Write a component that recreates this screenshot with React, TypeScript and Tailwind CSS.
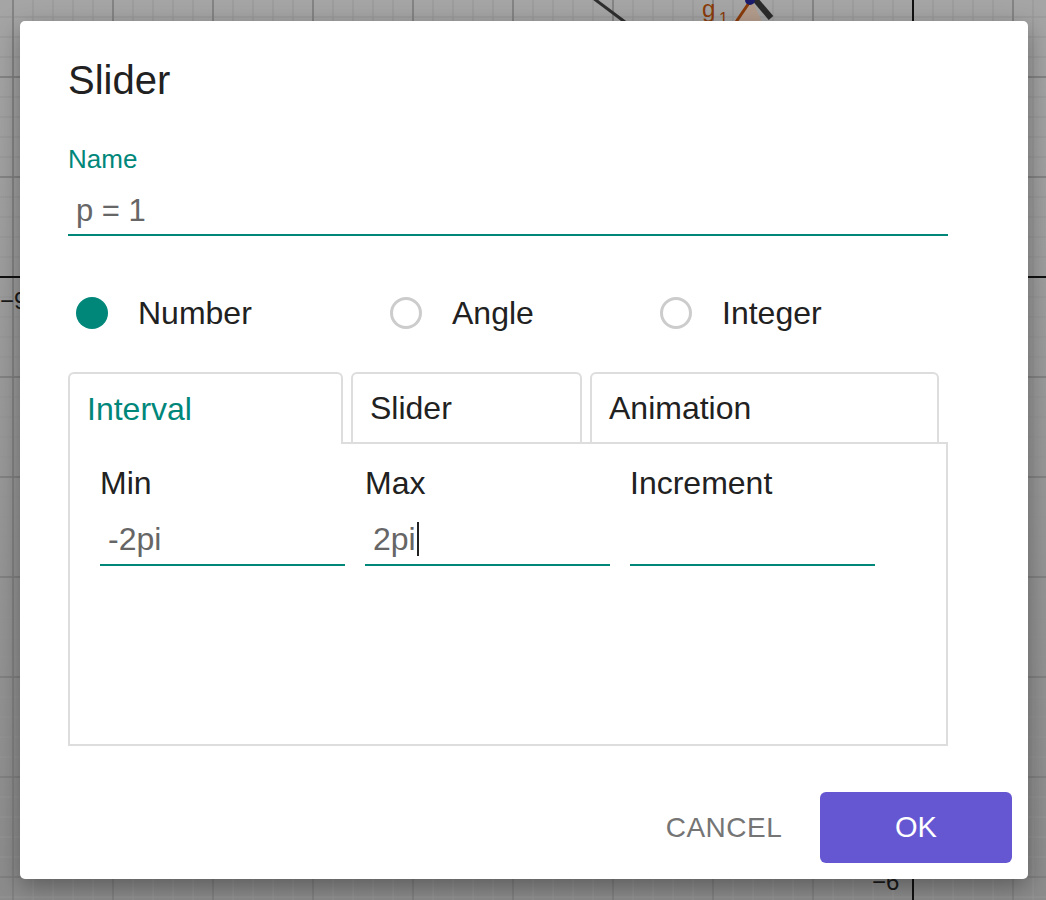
import React, { useState } from "react";

// grey graph canvas behind the dialog overlay
const GraphBackdrop: React.FC = () => {
  const minorX = Array.from({ length: 53 }, (_, i) => 13 + i * 20);
  const minorY = Array.from({ length: 46 }, (_, i) => 17 + i * 20);
  const majorX = Array.from({ length: 11 }, (_, i) => 13 + i * 100);
  const majorY = Array.from({ length: 9 }, (_, i) => 77 + i * 100);

  return (
    <svg
      className="absolute inset-0"
      width={1046}
      height={900}
      viewBox="0 0 1046 900"
    >
      <defs>
        <linearGradient id="shade" x1="0" y1="0" x2="0" y2="1">
          <stop offset="0" stopColor="#a5a5a5" />
          <stop offset="1" stopColor="#8c8c8c" />
        </linearGradient>
      </defs>
      <rect width={1046} height={900} fill="url(#shade)" />
      {minorX.map((x) => (
        <line key={`vx${x}`} x1={x} y1={0} x2={x} y2={900} stroke="#959595" strokeWidth={1} />
      ))}
      {minorY.map((y) => (
        <line key={`hy${y}`} x1={0} y1={y} x2={1046} y2={y} stroke="#959595" strokeWidth={1} />
      ))}
      {majorX.map((x) => (
        <line key={`VX${x}`} x1={x} y1={0} x2={x} y2={900} stroke="#7c7c7c" strokeWidth={1.5} />
      ))}
      {majorY.map((y) => (
        <line key={`HY${y}`} x1={0} y1={y} x2={1046} y2={y} stroke="#7c7c7c" strokeWidth={1.5} />
      ))}
      {/* axes */}
      <line x1={0} y1={277} x2={1046} y2={277} stroke="#111" strokeWidth={2} />
      <line x1={913} y1={0} x2={913} y2={900} stroke="#111" strokeWidth={2} />
      <text x={0} y={309} fontSize={24} fill="#1a1a1a" fontFamily="Liberation Sans, sans-serif">
        −9
      </text>
      <text x={872} y={890} fontSize={24} fill="#1a1a1a" fontFamily="Liberation Sans, sans-serif">
        −6
      </text>
      {/* bits of the construction peeking above the dialog */}
      <line x1={593} y1={-2} x2={625} y2={22} stroke="#2e2e2e" strokeWidth={3} />
      <polygon points="738,22 752,0 762,22" fill="#b39c8c" />
      <line x1={736} y1={22} x2={751} y2={0} stroke="#8a3b0a" strokeWidth={3} />
      <line x1={754} y1={-2} x2={771} y2={18} stroke="#2b2b2b" strokeWidth={6} />
      <circle cx={750} cy={0} r={5} fill="#1c1c6b" />
      <text x={702} y={17} fontSize={24} fill="#8a3b0a" fontFamily="Liberation Sans, sans-serif">
        g
      </text>
      <text x={719} y={24} fontSize={16} fill="#8a3b0a" fontFamily="Liberation Sans, sans-serif">
        1
      </text>
    </svg>
  );
};

interface RadioProps {
  label: string;
  checked: boolean;
  width: string;
  onSelect: () => void;
}

const Radio: React.FC<RadioProps> = ({ label, checked, width, onSelect }) => (
  <button type="button" onClick={onSelect} className={`flex h-[40px] items-center ${width}`}>
    {checked ? (
      <span className="block h-[32px] w-[32px] rounded-full bg-[#00877a]" />
    ) : (
      <span className="block h-[32px] w-[32px] rounded-full border-[3px] border-[#cccccc]" />
    )}
    <span className="ml-[30px] text-[32px] leading-[40px] text-[#212121]">{label}</span>
  </button>
);

interface FieldProps {
  label: string;
  value: string;
  focused?: boolean;
}

const Field: React.FC<FieldProps> = ({ label, value, focused }) => (
  <div className="flex w-[245px] flex-col">
    <div className="h-[40px] text-[32px] leading-[40px] text-[#212121]">{label}</div>
    <div className="mt-[13px] flex h-[50px] items-center border-b-2 border-[#00877a] pb-[2px] pl-[8px]">
      <span className="text-[32px] leading-[40px] text-[#666666]">{value}</span>
      {focused && <span className="ml-[1px] h-[34px] w-[2px] bg-[#222]" />}
    </div>
  </div>
);

export default function App() {
  const [kind, setKind] = useState("number");
  const [tab, setTab] = useState("interval");

  const tabs = [
    { id: "interval", label: "Interval", width: "w-[275px]" },
    { id: "slider", label: "Slider", width: "w-[231px]" },
    { id: "animation", label: "Animation", width: "w-[349px]" },
  ];

  return (
    <div
      className="relative h-[900px] w-[1046px] overflow-hidden"
      style={{ fontFamily: '"Liberation Sans", Arial, sans-serif' }}
    >
      <GraphBackdrop />

      {/* Dialog */}
      <div className="relative ml-[20px] mt-[21px] flex h-[858px] w-[1008px] flex-col rounded-[5px] bg-white pl-[48px] pr-[16px] pt-[35px] shadow-[0_8px_24px_rgba(0,0,0,0.35)]">
        <h1 className="h-[48px] text-[40px] leading-[48px] text-[#212121]">Slider</h1>

        {/* Name */}
        <div className="mt-[40px] w-[880px]">
          <div className="h-[30px] text-[26px] leading-[30px] text-[#00877a]">Name</div>
          <div className="mt-[16px] flex h-[46px] items-center border-b-2 border-[#00877a] pb-[2px] pl-[8px]">
            <span className="text-[31px] leading-[40px] text-[#666666]">p = 1</span>
          </div>
        </div>

        {/* Type radios */}
        <div className="mt-[57px] flex pl-[8px]">
          <Radio label="Number" width="w-[314px]" checked={kind === "number"} onSelect={() => setKind("number")} />
          <Radio label="Angle" width="w-[270px]" checked={kind === "angle"} onSelect={() => setKind("angle")} />
          <Radio label="Integer" width="w-[200px]" checked={kind === "integer"} onSelect={() => setKind("integer")} />
        </div>

        {/* Tabs */}
        <div className="mt-[39px] flex h-[70px] w-[880px] items-start gap-[8px]">
          {tabs.map((t) => {
            const active = tab === t.id;
            return (
              <button
                key={t.id}
                type="button"
                onClick={() => setTab(t.id)}
                className={`${t.width} ${
                  active ? "relative z-10 h-[72px] bg-white text-[#00877a]" : "h-[70px] text-[#212121]"
                } rounded-t-[6px] border-2 border-b-0 border-[#dddddd] pl-[17px] text-left text-[32px] leading-[40px]`}
              >
                {t.label}
              </button>
            );
          })}
        </div>

        {/* Panel */}
        <div className="h-[304px] w-[880px] border-2 border-[#dddddd] pl-[30px] pt-[19px]">
          <div className="flex gap-[20px]">
            <Field label="Min" value="-2pi" />
            <Field label="Max" value="2pi" focused />
            <Field label="Increment" value="" />
          </div>
        </div>

        {/* Actions */}
        <div className="mt-[46px] flex justify-end">
          <button
            type="button"
            className="h-[71px] w-[192px] text-[28px] tracking-[0.5px] text-[#757575]"
          >
            CANCEL
          </button>
          <button
            type="button"
            className="h-[71px] w-[192px] rounded-[6px] bg-[#6557d2] text-[29px] text-white"
          >
            OK
          </button>
        </div>
      </div>
    </div>
  );
}
